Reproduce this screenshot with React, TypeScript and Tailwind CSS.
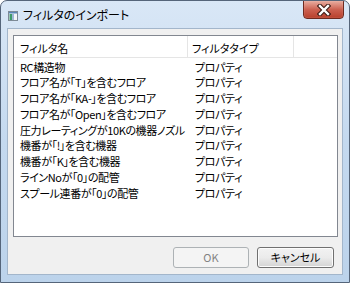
const rows = [
  "RC構造物",
  "フロア名が「T」を含むフロア",
  "フロア名が「KA-」を含むフロア",
  "フロア名が「Open」を含むフロア",
  "圧力レーティングが10Kの機器ノズル",
  "機番が「!」を含む機器",
  "機番が「K」を含む機器",
  "ラインNoが「0」の配管",
  "スプール連番が「0」の配管",
];

const font = { fontFamily: '"Noto Sans CJK JP", "Liberation Sans", sans-serif' };

function AppIcon() {
  return (
    <svg width="10" height="10" viewBox="0 0 10 10">
      <rect x="0.5" y="0.5" width="9" height="9" fill="#f4f6f8" stroke="#7d8a96" />
      <rect x="1" y="1" width="8" height="1.5" fill="#5a87b8" />
      <rect x="1.5" y="3" width="2.5" height="6" fill="#3f9a6a" />
      <rect x="4.5" y="3" width="1" height="6" fill="#4d79b3" />
    </svg>
  );
}

function CloseGlyph() {
  return (
    <svg width="14" height="12" viewBox="0 0 14 12">
      <path d="M3 2 L11 10 M11 2 L3 10" stroke="#3d1a14" strokeWidth="4.5" strokeLinecap="square" />
      <path d="M3 2 L11 10 M11 2 L3 10" stroke="#ffffff" strokeWidth="2.4" strokeLinecap="square" />
    </svg>
  );
}

export default function App() {
  return (
    <div
      className="w-[350px] h-[283px] flex flex-col border border-[#55657a] rounded-t-[7px] bg-gradient-to-b from-[#d9e7f6] via-[#c4d9ef] to-[#bcd3eb] overflow-hidden [font-feature-settings:'palt']"
      style={font}
    >
      <div className="h-[27px] flex items-start">
        <div className="mt-[10px] ml-[7px]">
          <AppIcon />
        </div>
        <div className="mt-[5px] ml-[5px] text-[12px] text-black leading-[18px]">
          フィルタのインポート
        </div>
        <div className="ml-auto mr-[5px] -mt-px w-[41px] h-[19px] flex items-center justify-center border border-[#6e2a20] rounded-b-[4px] bg-gradient-to-b from-[#e8ada1] via-[#cc6151] to-[#b8402c] shadow-[inset_0_0_1px_#f3c8bf]">
          <CloseGlyph />
        </div>
      </div>

      <div className="flex-1 mx-[6px] mb-[7px] border border-[#a3b6cb] bg-[#f0f0f0] flex flex-col pl-[5px] pr-[4px] pt-[6px]">
        <div className="h-[202px] border border-[#828790] bg-white flex flex-col">
          <div className="h-[22px] flex border-b border-[#e5e5e5] text-[11px] text-black">
            <div className="w-[174px] border-r border-[#e5e5e5] pl-[6px] pt-[3px] flex items-center">フィルタ名</div>
            <div className="w-[106px] border-r border-[#e5e5e5] pl-[4px] pt-[3px] flex items-center">フィルタタイプ</div>
            <div className="flex-1" />
          </div>
          <div className="flex flex-col pt-px text-[11px] tracking-[-0.4px] text-black">
            {rows.map((r) => (
              <div key={r} className="h-[15.75px] flex items-center">
                <div className="w-[175px] pl-[6px] whitespace-nowrap">{r}</div>
                <div className="pl-[6px]">プロパティ</div>
              </div>
            ))}
          </div>
        </div>

        <div className="mt-[10px] flex justify-end gap-[8px] pr-[4px]">
          <div className="w-[76px] h-[21px] border border-[#adb2b5] rounded-[3px] bg-[#f4f4f4] text-[#838383] text-[11px] flex items-center justify-center">
            OK
          </div>
          <div className="w-[77px] h-[21px] border border-[#707070] rounded-[3px] bg-gradient-to-b from-[#f2f2f2] via-[#ebebeb] to-[#d4d4d4] text-black text-[11px] flex items-center justify-center shadow-[inset_0_0_0_1px_#fcfcfc]">
            キャンセル
          </div>
        </div>
      </div>
    </div>
  );
}
